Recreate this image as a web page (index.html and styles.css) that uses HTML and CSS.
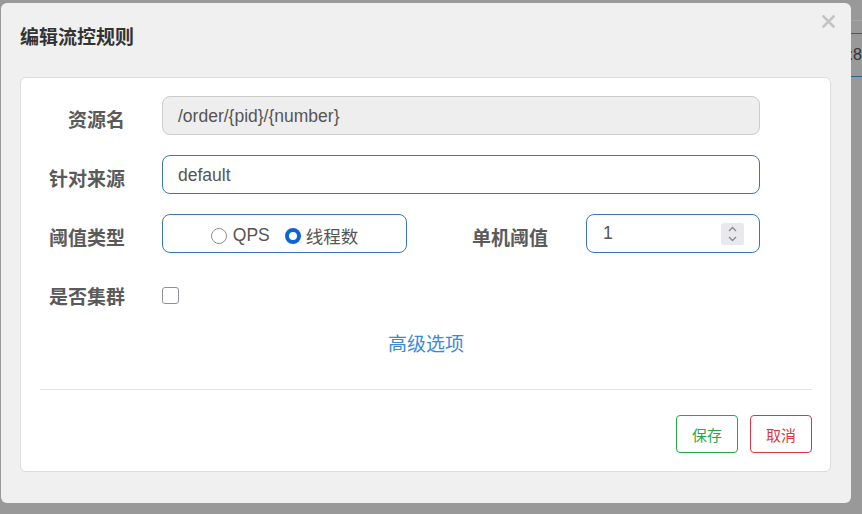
FILE: index.html
```html
<!DOCTYPE html>
<html lang="zh-CN">
<head>
<meta charset="utf-8">
<title>编辑流控规则</title>
<link rel="stylesheet" href="styles.css">
</head>
<body>
<div class="page">
  <div class="strip">
    <div class="faint"></div>
    <div class="blue b1"></div>
    <div class="txt">:8</div>
    <div class="blue b2"></div>
  </div>
</div>
<div class="dialog">
  <div class="header">
    <h4 class="title">编辑流控规则</h4>
    <button class="close" type="button" aria-label="close">
      <svg width="13" height="13" viewBox="0 0 13 13"><path d="M1.5 1.5 L11.5 11.5 M11.5 1.5 L1.5 11.5" stroke="#c4c4c4" stroke-width="2.6" stroke-linecap="square" fill="none"/></svg>
    </button>
  </div>
  <div class="card">
    <div class="row">
      <div class="lbl">资源名</div>
      <div class="field disabled">/order/{pid}/{number}</div>
    </div>
    <div class="row">
      <div class="lbl">针对来源</div>
      <div class="field">default</div>
    </div>
    <div class="row">
      <div class="lbl">阈值类型</div>
      <div class="field radios">
        <span class="radio"></span><span class="rtext first">QPS</span>
        <span class="radio checked"></span><span class="rtext">线程数</span>
      </div>
      <div class="lbl lbl2">单机阈值</div>
      <div class="field num">
        <span>1</span>
        <span class="spin">
          <svg width="23" height="22" viewBox="0 0 23 22"><path d="M8 8 L11.5 4.5 L15 8 M8 14 L11.5 17.5 L15 14" stroke="#8a8a8f" stroke-width="1.4" fill="none"/></svg>
        </span>
      </div>
    </div>
    <div class="row">
      <div class="lbl">是否集群</div>
      <span class="check"></span>
    </div>
    <div class="adv">高级选项</div>
    <div class="hr"></div>
    <div class="btns">
      <button class="btn save" type="button">保存</button>
      <button class="btn cancel" type="button">取消</button>
    </div>
  </div>
</div>
</body>
</html>
```
FILE: styles.css
```css
* { box-sizing: border-box; }
html, body { margin: 0; padding: 0; }
body {
  width: 862px;
  height: 514px;
  overflow: hidden;
  background: #999999;
  font-family: "Liberation Sans", "Noto Sans CJK SC", sans-serif;
  position: relative;
}
.page { height: 514px; display: flex; justify-content: flex-end; }
.strip { width: 11px; display: flex; flex-direction: column; }
.strip .faint { margin-top: 20px; height: 1px; background: #a4a4a4; }
.strip .blue { height: 1px; background: #2f5f93; }
.strip .b1 { margin-top: 12px; }
.strip .txt { align-self: flex-end; margin-top: 11px; font-size: 16px; line-height: 20px; color: #333; white-space: nowrap; }
.strip .b2 { margin-top: 11px; }

.dialog {
  position: absolute;
  left: 1px;
  top: 3px;
  width: 850px;
  height: 500px;
  background: #f0f0f0;
  border-radius: 6px;
}
.header { height: 74px; padding: 20px 0 0 19px; position: relative; }
.title {
  margin: 0;
  font-family: "Noto Sans CJK SC", sans-serif;
  font-size: 19px;
  line-height: 26px;
  font-weight: bold;
  color: #333;
}
.close {
  position: absolute;
  right: 16px;
  top: 12px;
  width: 13px;
  height: 13px;
  padding: 0;
  border: 0;
  background: none;
  display: block;
}
.close svg { display: block; }

.card {
  margin-left: 19px;
  width: 811px;
  height: 395px;
  background: #fff;
  border: 1px solid #dcdcdc;
  border-radius: 6px;
  padding: 18px 18px 0 19px;
}
.row { display: flex; height: 39px; margin-bottom: 20px; }
.row:nth-child(4) { margin-bottom: 0; }
.lbl {
  width: 85px;
  flex-shrink: 0;
  margin-right: 37px;
  margin-top: 10px;
  text-align: right;
  font-family: "Noto Sans CJK SC", sans-serif;
  font-size: 19px;
  line-height: 26px;
  font-weight: bold;
  color: #5a5a5a;
  white-space: nowrap;
}
.lbl2 { width: 141px; margin-right: 38px; }
.field {
  width: 598px;
  height: 39px;
  border: 1px solid #3a78b5;
  border-radius: 8px;
  padding: 2px 15px 0;
  display: flex;
  align-items: center;
  font-size: 17.5px;
  color: #555;
  background: #fff;
}
.field.disabled { background: #eeeeee; border-color: #cccccc; }
.radios { width: 245px; justify-content: center; padding: 4px 0 0; }
.radio {
  width: 16px;
  height: 16px;
  border-radius: 50%;
  border: 1px solid #8f8f9d;
  background: #fff;
  flex-shrink: 0;
  margin-right: 6px;
}
.radio.checked { border: 4px solid #0b63d8; margin-right: 5px; }
.rtext { font-family: "Liberation Sans", "Noto Sans CJK SC", sans-serif; font-size: 17.5px; color: #555; }
.rtext.first { margin-right: 15px; }
.num { width: 174px; padding: 0 15px 0 16px; justify-content: space-between; }
.spin { width: 23px; height: 22px; background: #e9e9ed; border-radius: 2px; display: block; }
.spin svg { display: block; }
.check {
  width: 17px;
  height: 17px;
  margin-top: 14px;
  border: 1px solid #8f8f9d;
  border-radius: 3px;
  background: #fff;
}
.adv {
  margin-top: 18px;
  text-align: center;
  font-family: "Noto Sans CJK SC", sans-serif;
  font-size: 19px;
  line-height: 26px;
  color: #3d8ad3;
}
.hr { margin-top: 33px; height: 1px; background: #e5e5e5; }
.btns { margin-top: 25px; display: flex; justify-content: flex-end; gap: 12px; }
.btn {
  width: 62px;
  height: 38px;
  padding: 0;
  background: #fff;
  border: 1px solid;
  border-radius: 4px;
  font-family: "Noto Sans CJK SC", sans-serif;
  font-size: 15px;
}
.save { color: #28a745; border-color: #28a745; }
.cancel { color: #dc3545; border-color: #dc3545; }
```
